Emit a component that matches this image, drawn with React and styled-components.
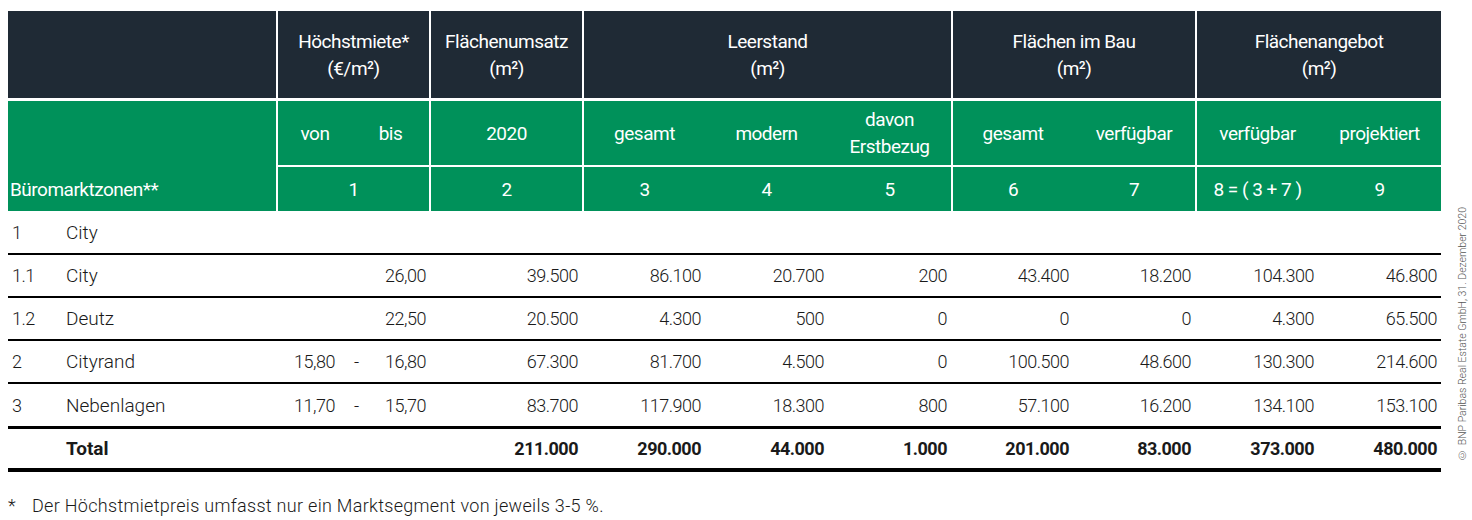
import React from 'react';
import styled, { createGlobalStyle } from 'styled-components';

const GlobalStyle = createGlobalStyle`
  body {
    margin: 0;
    background: #fff;
    font-family: 'Roboto', 'Liberation Sans', sans-serif;
    color: #1a1a1a;
  }
`;

const DARK = '#1f2a35';
const GREEN = '#00915a';

const rows = [
  { no: '1', name: 'City', von: '', bis: '', vals: [] },
  { no: '1.1', name: 'City', von: '', bis: '26,00', vals: ['39.500', '86.100', '20.700', '200', '43.400', '18.200', '104.300', '46.800'] },
  { no: '1.2', name: 'Deutz', von: '', bis: '22,50', vals: ['20.500', '4.300', '500', '0', '0', '0', '4.300', '65.500'] },
  { no: '2', name: 'Cityrand', von: '15,80', bis: '16,80', vals: ['67.300', '81.700', '4.500', '0', '100.500', '48.600', '130.300', '214.600'] },
  { no: '3', name: 'Nebenlagen', von: '11,70', bis: '15,70', vals: ['83.700', '117.900', '18.300', '800', '57.100', '16.200', '134.100', '153.100'] },
];

const totals = ['211.000', '290.000', '44.000', '1.000', '201.000', '83.000', '373.000', '480.000'];

const colWidths = [54, 214, 76, 77, 153, 123, 123, 123, 122, 122, 123, 123];

const Page = styled.div`
  padding: 11px 0 0 8px;
`;

const Row = styled.div`
  display: flex;
  align-items: flex-end;
`;

const Table = styled.table`
  width: 1433px;
  table-layout: fixed;
  border-collapse: separate;
  border-spacing: 0;
  flex: none;

  td, th {
    box-sizing: border-box;
    padding: 0;
  }
`;

const Head = styled.th`
  background: ${p => (p.$green ? GREEN : DARK)};
  color: #fff;
  font-size: 19px;
  font-weight: 400;
  letter-spacing: -0.5px;
  line-height: 27px;
  height: ${p => p.$h}px;
  text-align: ${p => p.$align || 'center'};
  vertical-align: ${p => p.$valign || 'middle'};
  border-left: ${p => (p.$sep ? '2px solid #fff' : '0')};
  border-top: ${p => (p.$gap ? `${p.$gap}px solid #fff` : '0')};
  padding: ${p => p.$pad || '0'} !important;
  white-space: pre-line;
`;

const BodyRow = styled.tr`
  td {
    height: ${p => p.$h}px;
    border-bottom: ${p => p.$rule}px solid #000;
    font-weight: ${p => (p.$bold ? 700 : 300)};
  }
`;

const Cell = styled.td`
  font-size: 19px;
  vertical-align: middle;
  text-align: ${p => p.$align || 'right'};
  padding: 0 ${p => p.$right ?? 4}px 0 ${p => p.$left ?? 4}px !important;
  white-space: nowrap;
`;

const Num = styled.span`
  font-size: 18px;
  letter-spacing: -0.5px;
`;

const BisWrap = styled.div`
  display: flex;
  justify-content: space-between;
  align-items: center;
`;

const Credit = styled.div`
  writing-mode: vertical-rl;
  transform: rotate(180deg);
  font-size: 10.5px;
  font-weight: 300;
  color: #555;
  margin: 0 0 11px 15px;
  white-space: nowrap;
`;

const Footnote = styled.p`
  margin: 24px 0 0;
  font-size: 18px;
  font-weight: 300;
  letter-spacing: 0.3px;
  line-height: 20px;
  display: flex;
`;

const Star = styled.span`
  width: 24px;
  flex: none;
`;

const groupHead = [
  { label: 'Höchstmiete*\n(€/m²)', span: 2 },
  { label: 'Flächenumsatz\n(m²)', span: 1 },
  { label: 'Leerstand\n(m²)', span: 3 },
  { label: 'Flächen im Bau\n(m²)', span: 2 },
  { label: 'Flächenangebot\n(m²)', span: 2 },
];

const subHead = [
  { label: 'von', sep: true },
  { label: 'bis' },
  { label: '2020', sep: true },
  { label: 'gesamt', sep: true },
  { label: 'modern' },
  { label: 'davon\nErstbezug' },
  { label: 'gesamt', sep: true },
  { label: 'verfügbar' },
  { label: 'verfügbar', sep: true },
  { label: 'projektiert' },
];

const numHead = [
  { label: '1', span: 2, sep: true },
  { label: '2', sep: true },
  { label: '3', sep: true },
  { label: '4' },
  { label: '5' },
  { label: '6', sep: true },
  { label: '7' },
  { label: '8 = ( 3 + 7 )', sep: true },
  { label: '9' },
];

const DataRow = ({ r, h, rule }) => (
  <BodyRow $h={h} $rule={rule}>
    <Cell $align="left"><Num>{r.no}</Num></Cell>
    <Cell $align="left">{r.name}</Cell>
    <Cell $right={17}><Num>{r.von}</Num></Cell>
    <Cell $left={2} $right={3}>
      <BisWrap>
        <Num>{r.von ? '-' : ''}</Num>
        <Num>{r.bis}</Num>
      </BisWrap>
    </Cell>
    {Array.from({ length: 8 }).map((_, i) => (
      <Cell key={i}><Num>{r.vals[i] || ''}</Num></Cell>
    ))}
  </BodyRow>
);

export default function App() {
  return (
    <Page>
      <GlobalStyle />
      <Row>
        <Table>
          <colgroup>
            {colWidths.map((w, i) => <col key={i} style={{ width: w }} />)}
          </colgroup>
          <thead>
            <tr>
              <Head colSpan={2} $h={87} />
              {groupHead.map(g => (
                <Head key={g.label} colSpan={g.span} $h={87} $sep>{g.label}</Head>
              ))}
            </tr>
            <tr>
              <Head colSpan={2} rowSpan={2} $green $gap={3} $h={113} $align="left" $valign="bottom" $pad="0 0 8px 2px">
                Büromarktzonen**
              </Head>
              {subHead.map((s, i) => (
                <Head key={i} $green $gap={3} $h={67} $sep={s.sep}>{s.label}</Head>
              ))}
            </tr>
            <tr>
              {numHead.map((n, i) => (
                <Head key={i} colSpan={n.span} $green $gap={2} $h={46} $sep={n.sep}>{n.label}</Head>
              ))}
            </tr>
          </thead>
          <tbody>
            {rows.map((r, i) => (
              <DataRow key={i} r={r} h={i === 0 ? 44 : i === 4 ? 45 : 43} rule={i === 4 ? 3 : 2} />
            ))}
            <BodyRow $h={43} $rule={4} $bold>
              <Cell />
              <Cell $align="left">Total</Cell>
              <Cell />
              <Cell />
              {totals.map((t, i) => <Cell key={i}><Num>{t}</Num></Cell>)}
            </BodyRow>
          </tbody>
        </Table>
        <Credit>© BNP Paribas Real Estate GmbH, 31. Dezember 2020</Credit>
      </Row>
      <Footnote>
        <Star>*</Star>
        Der Höchstmietpreis umfasst nur ein Marktsegment von jeweils 3-5 %.
      </Footnote>
    </Page>
  );
}
